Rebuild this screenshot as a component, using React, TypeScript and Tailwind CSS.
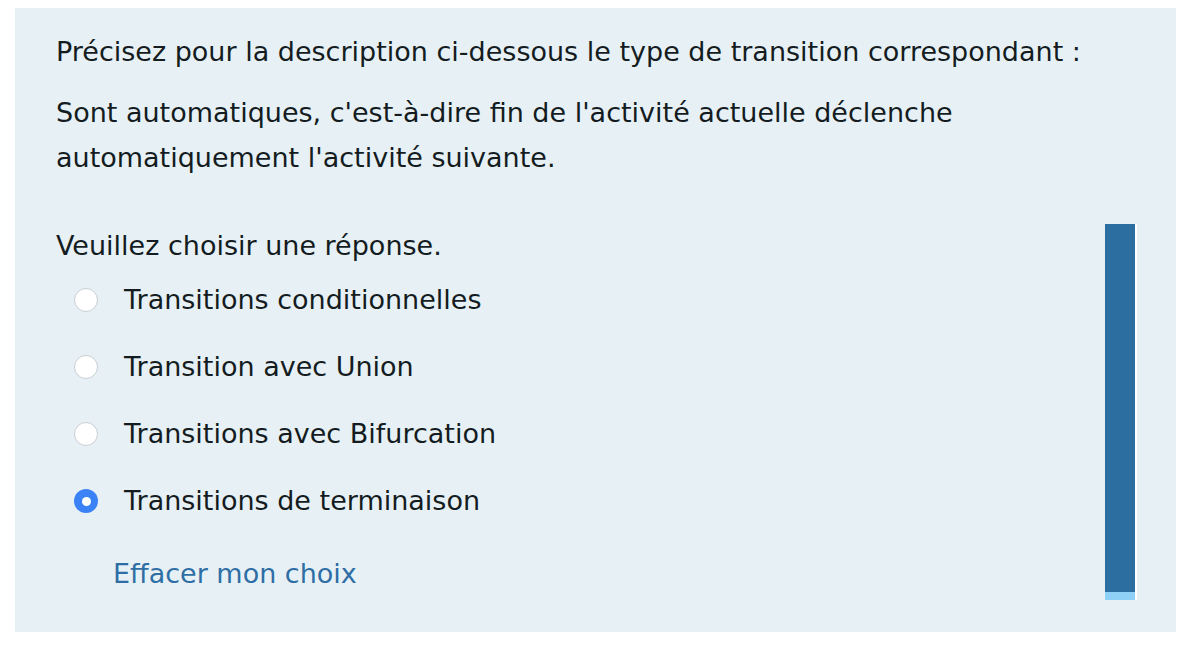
import React from "react";

const options = [
  "Transitions conditionnelles",
  "Transition avec Union",
  "Transitions avec Bifurcation",
  "Transitions de terminaison",
];

export default function App() {
  return (
    <div
      className="w-[1196px] h-[664px] bg-white pt-[8px] pl-[15px]"
      style={{ fontFamily: '"DejaVu Sans", "Liberation Sans", sans-serif' }}
    >
      <div className="w-[1161px] h-[624px] bg-[#e7f1f5] flex">
        <div className="flex-1 pl-[41px] pt-[25px] text-[#141c1f] text-[27px]">
          <p className="leading-[38px] whitespace-nowrap">
            Précisez pour la description ci-dessous le type de transition correspondant :
          </p>
          <p className="mt-[19px] leading-[45px] w-[960px]">
            Sont automatiques, c'est-à-dire fin de l'activité actuelle déclenche automatiquement l'activité suivante.
          </p>
          <p className="mt-[47px] leading-[38px]">Veuillez choisir une réponse.</p>
          <div className="mt-[16px] flex flex-col gap-[29px]">
            {options.map((o, i) => (
              <label key={o} className="flex items-center h-[38px]">
                <span className="w-[68px] pl-[18px] flex items-center">
                  {i === 3 ? (
                    <span className="w-[24px] h-[24px] rounded-full bg-[#3b82f6] flex items-center justify-center">
                      <span className="w-[9px] h-[9px] rounded-full bg-white" />
                    </span>
                  ) : (
                    <span className="w-[24px] h-[24px] rounded-full bg-white border border-[#c8cdd2]" />
                  )}
                </span>
                <span>{o}</span>
              </label>
            ))}
          </div>
          <p className="mt-[35px] pl-[57px] text-[#2f6ea5] leading-[38px]">Effacer mon choix</p>
        </div>
        <div className="w-[71px] pt-[216px] flex">
          <div className="flex flex-col w-[32px]">
            <div className="flex">
              <div className="w-[30px] h-[368px] bg-[#2c6ea0]" />
              <div className="w-[2px] h-[368px] bg-white" />
            </div>
            <div className="flex">
              <div className="w-[30px] h-[8px] bg-[#8fd0f6]" />
              <div className="w-[2px] h-[8px] bg-white" />
            </div>
          </div>
        </div>
      </div>
    </div>
  );
}
